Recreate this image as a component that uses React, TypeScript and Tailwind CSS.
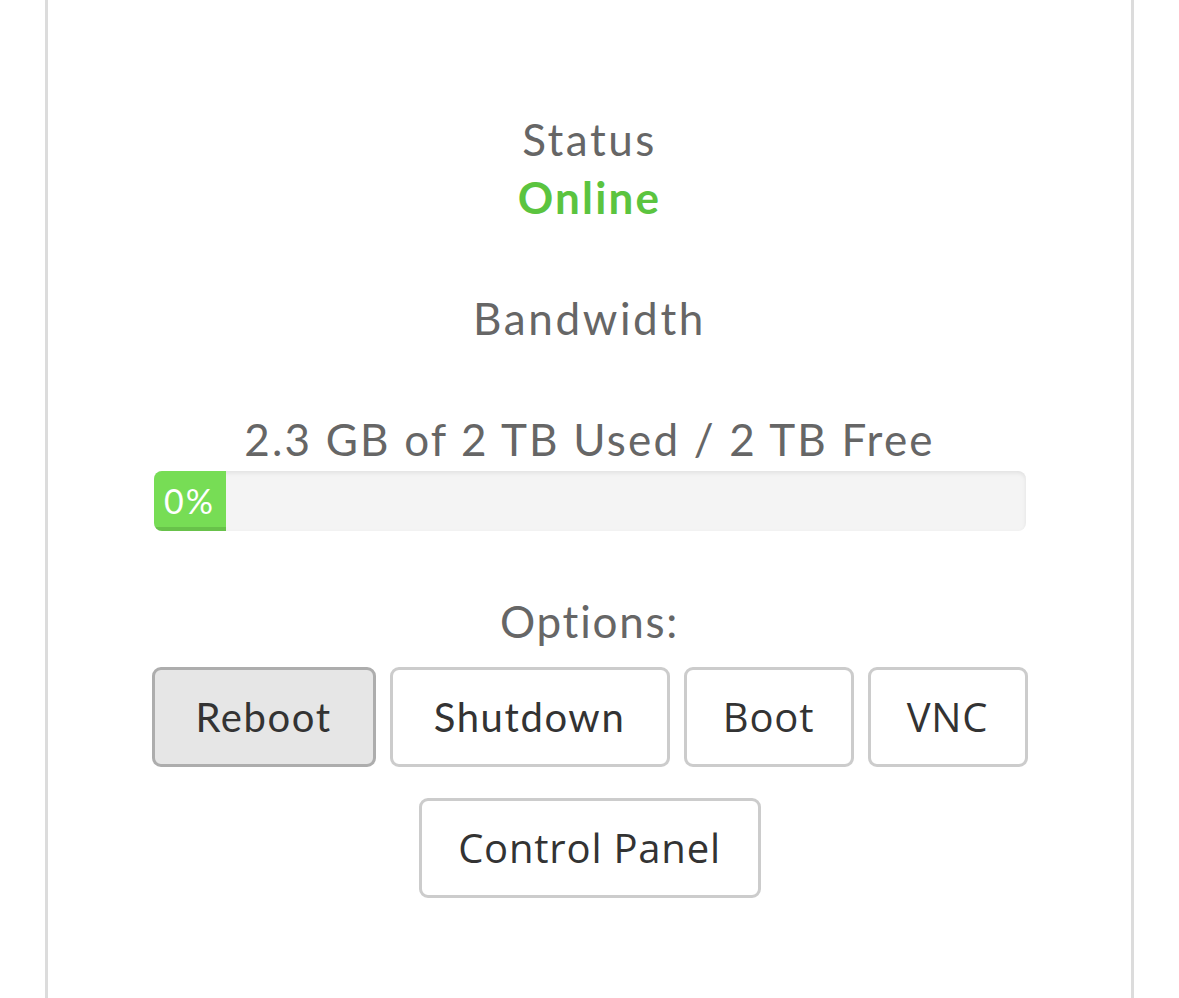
const buttons = [
  { label: 'Reboot', w: 'w-[224px]', active: true, font: 'lato' },
  { label: 'Shutdown', w: 'w-[280px]', active: false, font: 'lato' },
  { label: 'Boot', w: 'w-[170px]', active: false, font: 'open' },
  { label: 'VNC', w: 'w-[160px]', active: false, font: 'open' },
  { label: 'Control Panel', w: 'w-[342px]', active: false, font: 'open' },
]

const App = () => {
  return (
    <div className="min-h-screen w-full bg-white">
      <div className="mx-[45px] min-h-screen border-x-[3px] border-[#dcdcdc] bg-white">
        <div className="flex flex-col items-center pt-[117px] font-['Lato',sans-serif] text-[#666666]">
          <p className="text-[44px] leading-none tracking-[0.057em]">Status</p>
          <p className="mt-[14px] text-[44px] font-bold leading-none tracking-[0.05em] text-[#5bc43f]">Online</p>

          <p className="mt-[77px] text-[44px] leading-none tracking-[0.06em]">Bandwidth</p>

          <p className="mt-[77px] text-[44px] leading-none tracking-[0.05em]">2.3 GB of 2 TB Used / 2 TB Free</p>
          <div className="mt-[10px] flex h-[60px] w-[872px] overflow-hidden rounded-[8px] bg-[#f4f4f4] shadow-[inset_0_2px_4px_rgba(0,0,0,0.08)]">
            <div className="flex h-full w-[72px] items-center justify-center bg-[#77dd55] text-[34px] leading-none tracking-[0.06em] text-white shadow-[inset_0_-4px_0_rgba(0,0,0,0.12)]">
              0%
            </div>
          </div>

          <p className="mt-[68px] text-[44px] leading-none tracking-[0.04em]">Options:</p>
          <div className="mt-[24px] flex w-[880px] flex-wrap justify-center gap-x-[14px] gap-y-[31px]">
            {buttons.map((b) => (
              <button
                key={b.label}
                className={`flex h-[100px] ${b.w} items-center justify-center rounded-[9px] border-[3px] text-[40px] leading-none text-[#333333] ${
                  b.active ? 'border-[#adadad] bg-[#e6e6e6]' : 'border-[#cccccc] bg-white'
                } ${
                  b.font === 'open'
                    ? "font-['Open_Sans',sans-serif] tracking-[0.02em]"
                    : "font-['Lato',sans-serif] tracking-[0.04em]"
                }`}
              >
                {b.label}
              </button>
            ))}
          </div>
        </div>
      </div>
    </div>
  )
}

export default App
